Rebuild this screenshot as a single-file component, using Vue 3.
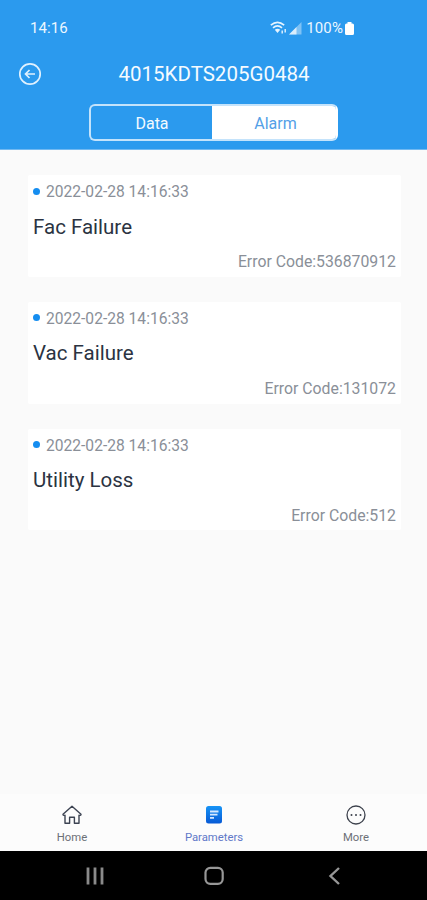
<script setup>
import { ref } from 'vue'

const tab = ref('Alarm')
const alarms = [
  { time: '2022-02-28 14:16:33', name: 'Fac Failure', code: '536870912' },
  { time: '2022-02-28 14:16:33', name: 'Vac Failure', code: '131072' },
  { time: '2022-02-28 14:16:33', name: 'Utility Loss', code: '512' },
]
</script>

<template>
  <div class="screen">
    <header class="header">
      <div class="status">
        <span>14:16</span>
        <div class="status-right">
          <svg class="wifi" width="18" height="14" viewBox="0 0 18 14" fill="none" stroke="#e6f4ff" stroke-width="1.600">
            <path d="M.8 4.200Q7.500-1.600 14.200 4.200M3 6.900Q7.500 3 12 6.900" />
            <path d="M4.800 8.800Q7.500 6.600 10.200 8.800L7.500 12Z" fill="#e6f4ff" stroke="none" />
            <path d="M12.200 9.500v3M15.200 11.500v-3.500" stroke-width="1.400" />
          </svg>
          <svg class="signal" width="13" height="13" viewBox="0 0 13 13">
            <path d="M0 12.500L12.500 0V12.500Z" fill="#fff" opacity=".4" />
            <path d="M0 12.500L7.500 5V12.500Z" fill="#fff" opacity=".7" />
          </svg>
          <span class="percent">100%</span>
          <svg class="battery" width="9" height="14" viewBox="0 0 9 14">
            <path d="M2.500 0h4v1.500h1Q9 1.500 9 3v8.500q0 1.500-1.500 1.500h-6Q0 13 0 11.500V3q0-1.500 1.500-1.500h1Z" fill="#fff" />
          </svg>
        </div>
      </div>
      <div class="titlebar">
        <svg class="back" width="24" height="24" viewBox="0 0 24 24" fill="none" stroke="#e0f1fe" stroke-width="1.700">
          <circle cx="12" cy="12" r="10.200" />
          <path d="M17 12H8M11.500 8L7.500 12l4 4" />
        </svg>
        <h1>4015KDTS205G0484</h1>
      </div>
      <div class="tabs">
        <button v-for="t in ['Data', 'Alarm']" :key="t" :class="{ active: tab === t }" @click="tab = t">{{ t }}</button>
      </div>
    </header>

    <main class="list">
      <article v-for="a in alarms" :key="a.code" class="card">
        <div class="time"><i class="dot"></i>{{ a.time }}</div>
        <h2>{{ a.name }}</h2>
        <div class="code">Error Code:{{ a.code }}</div>
      </article>
    </main>

    <nav class="nav">
      <div class="item">
        <svg width="20" height="20" viewBox="0 0 20 20" fill="none" stroke="#3c4352" stroke-width="1.400" stroke-linejoin="round">
          <path d="M10 1.200L1 9.300Q.8 10.500 3 10.300V18.300H7.600V12.200H12.400V18.300H17V10.300Q19.200 10.500 19 9.300Z" />
        </svg>
        <span>Home</span>
      </div>
      <div class="item selected">
        <svg width="20" height="20" viewBox="0 0 20 20">
          <defs>
            <linearGradient id="doc" x1="0" y1="0" x2="0" y2="1">
              <stop stop-color="#1794f6" /><stop offset="1" stop-color="#0759d5" />
            </linearGradient>
          </defs>
          <rect x="2" y="1" width="16" height="17.500" rx="2.500" fill="url(#doc)" />
          <path d="M6 6.500h8.500M6 9.700h7.500M6 12.900h4" stroke="#d5e8ff" stroke-width="1.800" />
        </svg>
        <span>Parameters</span>
      </div>
      <div class="item">
        <svg width="20" height="20" viewBox="0 0 20 20">
          <circle cx="10" cy="10" r="9" fill="none" stroke="#3d424d" stroke-width="1.300" />
          <g fill="#3d424d"><circle cx="5.500" cy="10" r="1" /><circle cx="10" cy="10" r="1" /><circle cx="14.500" cy="10" r="1" /></g>
        </svg>
        <span>More</span>
      </div>
    </nav>

    <footer class="system">
      <svg width="20" height="20" viewBox="0 0 20 20" fill="none" stroke="#8a8a8a" stroke-width="2.800">
        <path d="M4 1.500v17M11 1.500v17M18 1.500v17" />
      </svg>
      <svg width="20" height="20" viewBox="0 0 20 20" fill="none" stroke="#979797" stroke-width="2.200">
        <rect x="1.500" y="1.800" width="17.200" height="16" rx="4.800" />
      </svg>
      <svg width="20" height="20" viewBox="0 0 20 20" fill="none" stroke="#979797" stroke-width="2.400">
        <path d="M15 2L6.500 10l8.500 8" />
      </svg>
    </footer>
  </div>
</template>

<style>
body {
  margin: 0;
}
</style>

<style scoped>
.screen {
  width: 427px;
  height: 900px;
  display: flex;
  flex-direction: column;
  background: #fafafa;
  font-family: Roboto, "Liberation Sans", sans-serif;
  overflow: hidden;
}
.header {
  height: 150px;
  flex: none;
  box-sizing: border-box;
  padding-top: 18px;
  background: #2b9aee;
  border-bottom: 1px solid #72b9f1;
  color: #fff;
}
.status {
  height: 21px;
  padding: 0 73px 0 30px;
  display: flex;
  align-items: center;
  justify-content: space-between;
  font-size: 15px;
  line-height: 21px;
  letter-spacing: 0.1px;
  color: #edf7ff;
}
.status-right {
  display: flex;
  align-items: center;
}
.wifi {
  margin: -2px 1px 0 0;
}
.signal {
  margin-right: 4px;
}
.percent {
  margin-right: 2px;
}
.titlebar {
  height: 26px;
  margin-top: 22px;
  display: grid;
  grid-template-columns: 60px 1fr 60px;
  align-items: center;
}
.back {
  margin: -1px 0 0 18px;
}
h1 {
  margin: 0;
  padding-left: 1px;
  text-align: center;
  font-size: 20.5px;
  line-height: 26px;
  font-weight: 400;
  color: #f5fbff;
}
.tabs {
  width: 249px;
  height: 37px;
  box-sizing: border-box;
  margin: 17px auto 0 89px;
  display: grid;
  grid-template-columns: 121px 1fr;
  border: 2px solid #c4e3fb;
  border-right-color: #fff;
  border-radius: 6px;
  overflow: hidden;
}
.tabs button {
  border: 0;
  padding: 2px 0 0 1px;
  background: transparent;
  color: #f3faff;
  font: 400 16px/31px Roboto, "Liberation Sans", sans-serif;
}
.tabs .active {
  padding-left: 3px;
  background: #fff;
  color: #549fe7;
}
.list {
  flex: 1;
  padding: 25px 26px 0 28px;
  display: flex;
  flex-direction: column;
  gap: 25px;
}
.card {
  height: 101.800px;
  box-sizing: border-box;
  padding: 7px 5px 0;
  background: #fff;
  border-radius: 2px;
}
.time {
  display: flex;
  align-items: center;
  color: #8a8f98;
  font-size: 15.6px;
  line-height: 20px;
}
.dot {
  width: 7px;
  height: 7px;
  margin: -2px 6px 0 0;
  border-radius: 50%;
  background: #158df0;
}
h2 {
  margin: 11.500px 0 0;
  color: #2b3342;
  font-size: 20.5px;
  line-height: 26px;
  font-weight: 400;
}
.code {
  margin-top: 12.500px;
  text-align: right;
  color: #8a8f98;
  font-size: 15.800px;
  line-height: 20px;
}
.nav {
  height: 57px;
  flex: none;
  box-sizing: border-box;
  padding: 11px 0 0 1px;
  display: grid;
  grid-template-columns: repeat(3, 1fr);
  background: #fcfcfc;
}
.item {
  display: flex;
  flex-direction: column;
  align-items: center;
  gap: 5px;
  color: #6c7077;
  font-size: 11.300px;
  line-height: 16px;
}
.selected {
  color: #6078c8;
}
.system {
  height: 49px;
  flex: none;
  display: flex;
  justify-content: center;
  align-items: center;
  gap: 100px;
  background: #000;
}
</style>
